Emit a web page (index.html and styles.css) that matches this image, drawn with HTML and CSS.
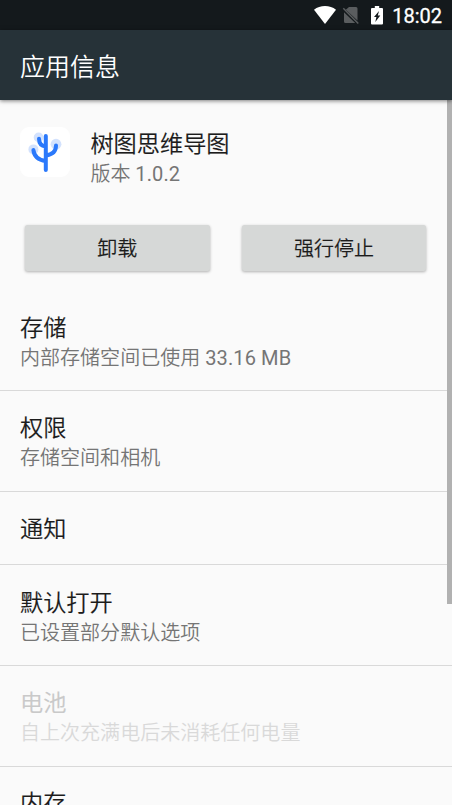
FILE: index.html
```html
<!DOCTYPE html>
<html lang="zh-CN">
<head>
<meta charset="utf-8">
<title>应用信息</title>
<link rel="stylesheet" href="styles.css">
</head>
<body>
<div class="status">
  <svg class="wifi" width="22" height="18" viewBox="0 0 22 18"><path d="M0 3.8C6-1.2 16-1.2 22 3.8L11 18Z" fill="#fff"/></svg>
  <svg class="sim" width="18" height="19" viewBox="0 0 18 19"><path d="M7 1H14Q15.5 1 15.5 2.5V14.5L3.8 3.8ZM2 6.2L13.2 17H3.5Q2 17 2 15.5Z" fill="#5a5d5f"/><path d="M1.3 2.2L16.3 17.5" stroke="#5a5d5f" stroke-width="1.5"/></svg>
  <svg class="battery" width="12" height="19" viewBox="0 0 12 19"><path d="M3.8 0H8.2V2H11Q12 2 12 3V17.5Q12 18.5 11 18.5H1Q0 18.5 0 17.5V3Q0 2 1 2H3.8Z" fill="#fff"/><path d="M8 5L3 11H5.4L4.3 16L9.3 9.5H6.8Z" fill="#14191c"/></svg>
  <span class="clock">18:02</span>
</div>
<header class="toolbar">应用信息</header>
<main class="content">
  <section class="app">
    <svg class="app-icon" width="50" height="50" viewBox="0 0 50 50">
      <rect width="50" height="50" rx="9" fill="#fff"/>
      <g fill="#d3e2fd"><circle cx="18.6" cy="10.4" r="4.9"/><circle cx="36" cy="17.2" r="5.4"/><circle cx="13.4" cy="22.4" r="5"/></g>
      <g fill="none" stroke="#2b79fb" stroke-width="4" stroke-linecap="round"><path d="M25.8 9V43M19 11.8C19 16 21 19 25.8 19.5M36 18.5C36 24 33 27.5 25.8 28.5M13.4 23C14 29 18 33 25.8 34"/></g>
    </svg>
    <div class="app-text">
      <div class="title">树图思维导图</div>
      <div class="summary">版本 <span class="latin">1.0.2</span></div>
    </div>
  </section>
  <div class="actions">
    <button class="action">卸载</button>
    <button class="action">强行停止</button>
  </div>
  <div class="row"><div class="title">存储</div><div class="summary">内部存储空间已使用 <span class="latin">33.16 MB</span></div></div>
  <div class="row permissions"><div class="title">权限</div><div class="summary">存储空间和相机</div></div>
  <div class="row single"><div class="title">通知</div></div>
  <div class="row"><div class="title">默认打开</div><div class="summary">已设置部分默认选项</div></div>
  <div class="row disabled"><div class="title">电池</div><div class="summary">自上次充满电后未消耗任何电量</div></div>
  <div class="row memory"><div class="title">内存</div></div>
  <div class="scrollbar"></div>
</main>
</body>
</html>
```
FILE: styles.css
```css
* { box-sizing: border-box; }
body {
  margin: 0;
  height: 805px;
  overflow: hidden;
  display: flex;
  flex-direction: column;
  background: #fafafa;
  color: #1c1c1c;
  font-family: Roboto, "Noto Sans CJK SC", sans-serif;
}
.status {
  flex: none;
  height: 30px;
  padding-right: 10px;
  display: flex;
  align-items: center;
  justify-content: flex-end;
  background: #14191c;
  color: #fff;
}
.wifi { margin-right: 6px; }
.sim { margin-right: 11px; }
.battery { margin-right: 9px; }
.clock { font-size: 20px; line-height: 30px; padding-top: 2px; -webkit-text-stroke: 0.3px #fff; }
.toolbar {
  flex: none;
  position: relative;
  z-index: 1;
  height: 70px;
  padding: 1px 0 0 20px;
  background: #263238;
  color: #fff;
  font-size: 25px;
  line-height: 74px;
  font-weight: 350;
  box-shadow: 0 1px 4px rgba(0, 0, 0, 0.5);
}
.content { position: relative; flex: 1; min-height: 0; overflow: hidden; }
.app { display: flex; height: 124px; padding: 27px 20px 0; gap: 20.4px; }
.app-icon { flex: none; }
.app-text { padding-top: 2px; }
.title { font-size: 23.2px; line-height: 30px; white-space: nowrap; font-weight: 350; -webkit-text-stroke: 0.15px currentColor; }
.summary { font-size: 20.05px; line-height: 30px; color: #757575; white-space: nowrap; font-weight: 350; }
.latin { font-weight: 400; letter-spacing: 0.1px; }
.actions { display: grid; grid-template-columns: 184.6px 184.6px; gap: 32px; padding: 1px 25px 0; height: 66.3px; align-items: start; }
.action {
  height: 46px;
  padding: 1px 0 0;
  border: 0;
  border-radius: 2.5px;
  background: #d6d8d7;
  color: #1c1c1c;
  font: 350 20px/46px Roboto, "Noto Sans CJK SC", sans-serif;
  -webkit-text-stroke: 0.15px currentColor;
  box-shadow: 0 1px 3px rgba(0, 0, 0, 0.3);
}
.row { height: 100.7px; padding: 22.6px 20px 0; border-bottom: 1px solid #d9d9d9; }
.permissions { padding-top: 22.2px; }
.single { height: 73.5px; }
.disabled { padding-top: 22.2px; }
.disabled .title { color: #c9c9c9; }
.disabled .summary { color: #d9d9d9; }
.memory { padding-top: 21.4px; }
.scrollbar { position: absolute; top: 0; right: 0; width: 5px; height: 504px; background: #b1b1b1; }
```
